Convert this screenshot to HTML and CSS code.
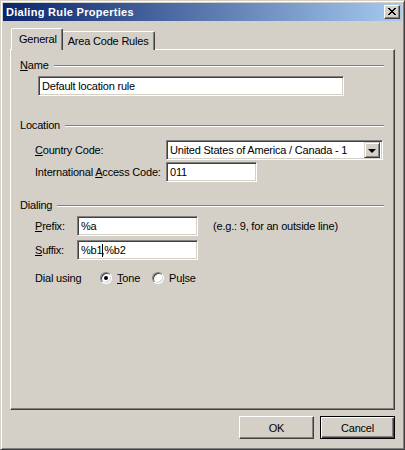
FILE: index.html
```html
<!DOCTYPE html>
<html>
<head>
<meta charset="utf-8">
<link rel="stylesheet" href="styles.css">
</head>
<body>
<div class="window">
  <div class="titlebar">
    <span class="title">Dialing Rule Properties</span>
    <div class="close">
      <svg width="8" height="7" viewBox="0 0 8 7"><path d="M0 0h2v1h-2zM6 0h2v1h-2zM1 1h2v1h-2zM5 1h2v1h-2zM2 2h4v1h-4zM3 3h2v1h-2zM2 4h4v1h-4zM1 5h2v1h-2zM5 5h2v1h-2zM0 6h2v1h-2zM6 6h2v1h-2z" fill="#000"/></svg>
    </div>
  </div>
  <div class="body">
    <div class="tabs">
      <div class="tab active">General</div>
      <div class="tab">Area Code Rules</div>
    </div>
    <div class="panel">
      <div class="group-head g-name"><span><u>N</u>ame</span><i class="rule"></i></div>
      <div class="edit name-edit">Default location rule</div>

      <div class="group-head g-loc"><span>Location</span><i class="rule"></i></div>
      <div class="row r-country">
        <span class="lbl lbl-wide"><u>C</u>ountry Code:</span>
        <div class="combo">
          <span class="combo-text">United States of America / Canada - 1</span>
          <span class="drop"><i class="tri"></i></span>
        </div>
      </div>
      <div class="row r-access">
        <span class="lbl lbl-wide">International <u>A</u>ccess Code:</span>
        <div class="edit access-edit">011</div>
      </div>

      <div class="group-head g-dial"><span>Dialing</span><i class="rule"></i></div>
      <div class="row r-prefix">
        <span class="lbl lbl-short"><u>P</u>refix:</span>
        <div class="edit short-edit">%a</div>
        <span class="hint">(e.g.: 9, for an outside line)</span>
      </div>
      <div class="row r-suffix">
        <span class="lbl lbl-short"><u>S</u>uffix:</span>
        <div class="edit short-edit">%b1<i class="caret"></i><span class="comma">,</span>%b2</div>
      </div>
      <div class="row r-using">
        <span class="lbl lbl-using">Dial using</span>
        <span class="radio checked"></span><span class="rlabel"><u>T</u>one</span>
        <span class="radio"></span><span class="rlabel">Pu<u>l</u>se</span>
      </div>
    </div>
    <div class="buttons">
      <div class="btn">OK</div>
      <div class="btn default"><span>Cancel</span></div>
    </div>
  </div>
</div>
</body>
</html>
```

FILE: styles.css
```css
* { box-sizing: border-box; }
html, body { margin: 0; padding: 0; background: #d4d0c8; }
body {
  font-family: "Liberation Sans", Arial, sans-serif;
  font-size: 11px;
  letter-spacing: -0.2px;
  color: #000;
}
u { text-decoration: underline; text-underline-offset: 1px; }

.window {
  width: 405px;
  height: 450px;
  background: #d4d0c8;
  border: 1px solid;
  border-color: #d4d0c8 #404040 #404040 #d4d0c8;
  box-shadow: inset 1px 1px #ffffff, inset -1px -1px #808080;
  padding: 2px;
  display: flex;
  flex-direction: column;
}

.titlebar {
  height: 18px;
  flex: none;
  background: linear-gradient(to right, #0a246a 0%, #a6caf0 100%);
  display: flex;
  align-items: center;
  justify-content: space-between;
  padding: 0 2px 0 3px;
}
.title {
  color: #fff;
  font-weight: bold;
  font-size: 11px;
  letter-spacing: 0.3px;
}
.close {
  width: 16px;
  height: 14px;
  background: #d4d0c8;
  border: 1px solid;
  border-color: #fff #404040 #404040 #fff;
  box-shadow: inset -1px -1px #808080;
  display: flex;
  align-items: center;
  justify-content: center;
  padding-bottom: 1px;
}
.close svg { display: block; }

.body {
  flex: 1;
  padding: 8px 7px 8px 7px;
  display: flex;
  flex-direction: column;
}

.tabs {
  height: 21px;
  display: flex;
  align-items: flex-end;
  padding-left: 1px;
  position: relative;
  z-index: 1;
  margin-bottom: -1px;
}
.tab {
  height: 19px;
  padding: 0 5px 0 5px;
  border: 1px solid #fff;
  border-bottom: none;
  border-right: 1px solid #404040;
  box-shadow: inset -1px 0 #808080;
  border-radius: 2px 2px 0 0;
  display: flex;
  align-items: center;
  background: #d4d0c8;
}
.tab.active {
  height: 22px;
  padding: 0 5px 2px 7px;
  margin-right: -1px;
  position: relative;
  z-index: 2;
}

.panel {
  height: 361px;
  flex: none;
  border: 1px solid;
  border-color: #fff #404040 #404040 #fff;
  box-shadow: inset -1px -1px #808080;
  padding: 8px 10px 0 9px;
  display: flex;
  flex-direction: column;
}

.group-head {
  height: 13px;
  display: flex;
  align-items: center;
  line-height: 13px;
}
.rule {
  flex: 1;
  height: 2px;
  border-top: 1px solid #808080;
  border-bottom: 1px solid #fff;
  margin-left: 5px;
  margin-top: 1px;
}
.g-name { margin-top: 1px; }
.g-loc { margin-top: 23px; }
.g-dial { margin-top: 17px; }

.edit {
  height: 20px;
  background: #fff;
  border: 1px solid;
  border-color: #808080 #fff #fff #808080;
  box-shadow: inset 1px 1px #404040, inset -1px -1px #d4d0c8;
  padding: 0 3px;
  display: flex;
  align-items: center;
  white-space: nowrap;
}
.name-edit { width: 306px; margin: 4px 0 0 18px; }

.row {
  display: flex;
  align-items: center;
  padding-left: 15px;
}
.lbl { flex: none; }
.lbl-wide { width: 131px; }
.lbl-short { width: 42px; }
.lbl-using { width: 65px; }

.r-country { margin-top: 8px; }
.r-access { margin-top: 2px; }
.r-prefix { margin-top: 4px; }
.r-suffix { margin-top: 4px; }
.r-using { margin-top: 11px; height: 14px; }

.combo {
  width: 217px;
  height: 20px;
  background: #fff;
  border: 1px solid;
  border-color: #808080 #fff #fff #808080;
  box-shadow: inset 1px 1px #404040, inset -1px -1px #d4d0c8;
  display: flex;
  align-items: center;
  justify-content: space-between;
  padding: 2px 2px 2px 3px;
}
.combo-text { white-space: nowrap; }
.drop {
  width: 16px;
  height: 16px;
  flex: none;
  background: #d4d0c8;
  border: 1px solid;
  border-color: #d4d0c8 #404040 #404040 #d4d0c8;
  box-shadow: inset 1px 1px #fff, inset -1px -1px #808080;
  display: flex;
  align-items: center;
  justify-content: center;
}
.tri {
  width: 0;
  height: 0;
  border-left: 4px solid transparent;
  border-right: 4px solid transparent;
  border-top: 4px solid #000;
  margin-top: 1px;
}

.access-edit { width: 91px; }
.short-edit { width: 121px; padding-left: 3px; }
.hint { margin-left: 15px; }
.caret {
  display: inline-block;
  width: 1px;
  height: 13px;
  background: #000;
}
.comma { margin-left: -2px; }

.radio {
  width: 12px;
  height: 12px;
  flex: none;
  border-radius: 50%;
  background: #fff;
  border: 1px solid;
  border-color: #808080 #fff #fff #808080;
  box-shadow: inset 1px 1px #404040, inset -1px -1px #d4d0c8;
  display: flex;
  align-items: center;
  justify-content: center;
}
.radio.checked::after {
  content: "";
  width: 4px;
  height: 4px;
  border-radius: 50%;
  background: #000;
}
.rlabel { margin-left: 5px; margin-right: 12px; }

.buttons {
  margin-top: 6px;
  display: flex;
  justify-content: flex-end;
  gap: 6px;
}
.btn {
  width: 75px;
  height: 23px;
  border: 1px solid;
  border-color: #fff #404040 #404040 #fff;
  box-shadow: inset -1px -1px #808080;
  display: flex;
  align-items: center;
  justify-content: center;
}
.btn.default {
  border: 1px solid #000;
  box-shadow: inset 1px 1px #fff, inset -1px -1px #404040, inset -2px -2px #808080;
}
```
